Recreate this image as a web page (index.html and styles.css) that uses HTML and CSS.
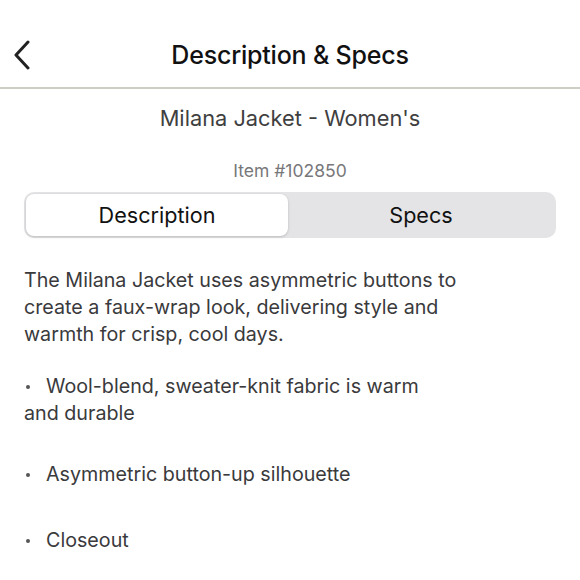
FILE: index.html
```html
<!DOCTYPE html>
<html>
<head>
<meta charset="utf-8">
<link rel="stylesheet" href="styles.css">
</head>
<body>
<header class="nav">
  <div class="nav-left">
    <svg class="back" width="20" height="30" viewBox="0 0 20 30"><path d="M16 2 L4 15 L16 28" fill="none" stroke="#222" stroke-width="3" stroke-linecap="round" stroke-linejoin="round"/></svg>
  </div>
  <h1 class="nav-title">Description &amp; Specs</h1>
  <div></div>
</header>
<main class="content">
  <h2 class="product">Milana Jacket - Women's</h2>
  <p class="item">Item #102850</p>
  <div class="segmented">
    <div class="seg seg-active">Description</div>
    <div class="seg">Specs</div>
  </div>
  <div class="desc">
    <p class="intro">The Milana Jacket uses asymmetric buttons to create a faux-wrap look, delivering style and warmth for crisp, cool days.</p>
    <p class="bullet b1">Wool-blend, sweater-knit fabric is warm and durable</p>
    <p class="bullet b2">Asymmetric button-up silhouette</p>
    <p class="bullet b3">Closeout</p>
  </div>
</main>
</body>
</html>
```
FILE: styles.css
```css
* { box-sizing: border-box; }
html, body { margin: 0; padding: 0; background: #fff; }
body { font-family: Inter, "Noto Sans", sans-serif; color: #3a3a3c; width: 580px; overflow: hidden; }

.nav {
  display: grid;
  grid-template-columns: 1fr auto 1fr;
  align-items: center;
  height: 89px;
  padding-top: 23px;
  border-bottom: 2px solid #cdcec4;
}
.nav-left { padding-left: 12px; display: flex; align-items: center; }
.back { display: block; }
.nav-title {
  margin: 0;
  font-size: 25px;
  font-weight: 500;
  color: #111;
  letter-spacing: -0.2px;
}

.content { padding: 0 24px; }
.product {
  margin: 15px 0 0;
  text-align: center;
  font-size: 21.8px;
  font-weight: 400;
  line-height: 28px;
  color: #3f3f41;
}
.item {
  margin: 28px 0 0;
  text-align: center;
  font-size: 17.5px;
  line-height: 22px;
  color: #77777a;
}
.segmented {
  margin-top: 10px;
  display: grid;
  grid-template-columns: 262px 1fr;
  background: #e4e4e6;
  border-radius: 10px;
  padding: 2px;
  height: 46px;
}
.seg {
  display: flex;
  align-items: center;
  justify-content: center;
  font-size: 21.6px;
  color: #111;
  border-radius: 8px;
}
.seg-active {
  background: #fff;
  box-shadow: 0 1px 3px rgba(0,0,0,0.18);
}

.desc { margin-top: 29px; font-size: 19.7px; line-height: 27px; color: #3a3a3c; }
.desc p { margin: 0; }
.intro { max-width: 442px; }
.bullet { max-width: 420px; }
.bullet::before {
  content: "";
  display: inline-block;
  width: 4px;
  height: 4px;
  border-radius: 50%;
  background: #555;
  margin: 0 16px 0 2px;
  vertical-align: 4px;
}
.b1 { margin-top: 25px !important; }
.b2 { margin-top: 34px !important; }
.b3 { margin-top: 39px !important; }
```
